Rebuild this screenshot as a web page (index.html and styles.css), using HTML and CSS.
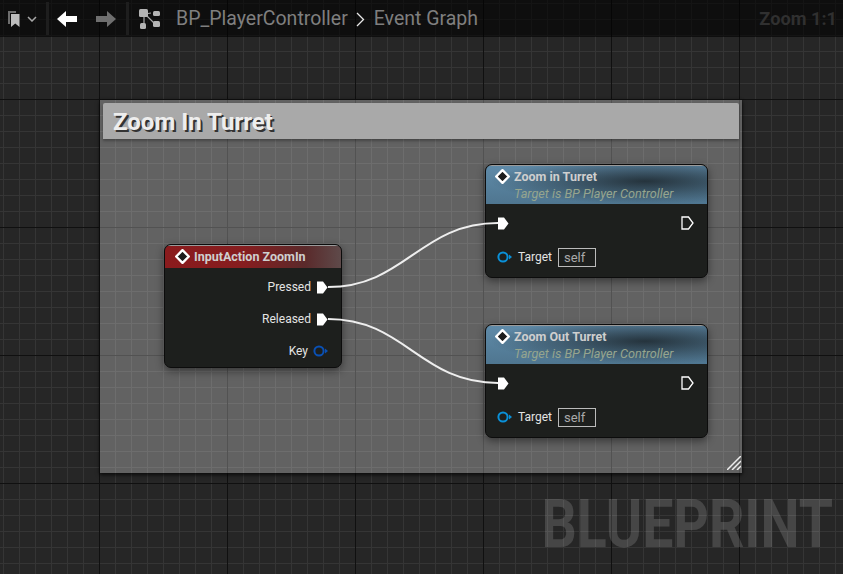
FILE: index.html
```html
<!DOCTYPE html>
<html lang="en">
<head>
  <meta charset="UTF-8" />
  <title>BP_PlayerController - Event Graph</title>
  <link rel="stylesheet" href="styles.css">
</head>
<body>
  <div class="graph">
    <div class="toolbar">
      <button class="tool tool-bookmark">
        <svg width="12" height="16" viewBox="0 0 12 16"><path d="M0 0h8v2H2v11H0z" fill="#6e6e6e"/><path d="M3 3h8.500v13L7.250 12.500 3 16z" fill="#bdbdbd"/></svg>
        <svg width="10" height="6" viewBox="0 0 10 6"><path d="M1 1l4 4 4-4" fill="none" stroke="#a8a8a8" stroke-width="1.500"/></svg>
      </button>
      <span class="sep"></span>
      <button class="tool tool-arrow">
        <svg width="20" height="16" viewBox="0 0 20 16"><path d="M0 8l9-8v5h11v6H9v5z" fill="#fff"/></svg>
      </button>
      <button class="tool tool-arrow tool-last">
        <svg width="20" height="16" viewBox="0 0 20 16"><path d="M20 8l-9-8v5H0v6h11v5z" fill="#6f6f6f"/></svg>
      </button>
      <span class="sep"></span>
      <svg class="graph-icon" width="22" height="20" viewBox="0 0 22 20">
        <path d="M6 5l6-1M6 5l9 9M5 8v6" stroke="#a8a8a8" stroke-width="1.200" fill="none"/>
        <rect x="0" y="0" width="9" height="8" rx="1.500" fill="#b4b4b4"/>
        <rect x="14" y="2" width="7" height="5" rx="1.500" fill="#b4b4b4"/>
        <rect x="1" y="14" width="6" height="6" rx="1.500" fill="#b4b4b4"/>
        <rect x="14" y="12" width="7" height="6" rx="1.500" fill="#b4b4b4"/>
      </svg>
      <span class="crumb">BP_PlayerController</span>
      <svg class="crumb-sep" width="9" height="15" viewBox="0 0 9 15"><path d="M1 1l6.500 6.500L1 14" fill="none" stroke="#e8e8e8" stroke-width="1.300"/></svg>
      <span class="crumb">Event Graph</span>
      <span class="zoom-label">Zoom 1:1</span>
    </div>

    <div class="comment">
      <div class="comment-title">Zoom In Turret</div>
      <svg class="resize" width="14" height="14" viewBox="0 0 14 14">
        <path d="M0 14L14 0M5 14L14 5M10 14l4-4" stroke="#eee" stroke-width="1.500" fill="none"/>
      </svg>
    </div>

    <div class="node node-input">
      <div class="node-head head-red">
        <div class="node-title">
          <svg class="diamond" width="15" height="15" viewBox="0 0 15 15"><path d="M7.500 1.200l6.300 6.300-6.300 6.300-6.300-6.300z" fill="#1c1c1c" stroke="#fff" stroke-width="2.400" stroke-linejoin="round"/></svg>
          InputAction ZoomIn
        </div>
      </div>
      <div class="node-body outputs">
        <div class="pin-row">Pressed <svg class="pin" width="12" height="13" viewBox="0 0 12 13"><path d="M1 .5h6l4.500 6-4.500 6H1z" fill="#fff"/></svg></div>
        <div class="pin-row">Released <svg class="pin" width="12" height="13" viewBox="0 0 12 13"><path d="M1 .5h6l4.500 6-4.500 6H1z" fill="#fff"/></svg></div>
        <div class="pin-row key-row">Key <svg class="pin" width="15" height="12" viewBox="0 0 15 12"><circle cx="6" cy="6" r="4.600" fill="none" stroke="#0a50b4" stroke-width="2"/><path d="M12 3.500L15 6l-3 2.500z" fill="#0a50b4"/></svg></div>
      </div>
    </div>

    <div class="node node-in">
      <div class="node-head head-blue">
        <div class="node-title">
          <svg class="diamond" width="15" height="15" viewBox="0 0 15 15"><path d="M7.500 1.200l6.300 6.300-6.300 6.300-6.300-6.300z" fill="#1c1c1c" stroke="#fff" stroke-width="2.400" stroke-linejoin="round"/></svg>
          Zoom in Turret
        </div>
        <div class="node-sub">Target is BP Player Controller</div>
      </div>
      <div class="node-body">
        <div class="exec-row">
          <svg width="12" height="13" viewBox="0 0 12 13"><path d="M1 .5h6l4.500 6-4.500 6H1z" fill="#fff"/></svg>
          <svg width="13" height="14" viewBox="0 0 13 14"><path d="M1 1h6.500l4.500 6-4.500 6H1z" fill="none" stroke="#fff" stroke-width="1.300"/></svg>
        </div>
        <div class="target-row">
          <svg width="15" height="12" viewBox="0 0 15 12"><circle cx="6" cy="6" r="4.600" fill="none" stroke="#0a90d8" stroke-width="2"/><path d="M12 3.500L15 6l-3 2.500z" fill="#0a90d8"/></svg>
          Target <span class="self">self</span>
        </div>
      </div>
    </div>

    <div class="node node-out">
      <div class="node-head head-blue">
        <div class="node-title">
          <svg class="diamond" width="15" height="15" viewBox="0 0 15 15"><path d="M7.500 1.200l6.300 6.300-6.300 6.300-6.300-6.300z" fill="#1c1c1c" stroke="#fff" stroke-width="2.400" stroke-linejoin="round"/></svg>
          Zoom Out Turret
        </div>
        <div class="node-sub">Target is BP Player Controller</div>
      </div>
      <div class="node-body">
        <div class="exec-row">
          <svg width="12" height="13" viewBox="0 0 12 13"><path d="M1 .5h6l4.500 6-4.500 6H1z" fill="#fff"/></svg>
          <svg width="13" height="14" viewBox="0 0 13 14"><path d="M1 1h6.500l4.500 6-4.500 6H1z" fill="none" stroke="#fff" stroke-width="1.300"/></svg>
        </div>
        <div class="target-row">
          <svg width="15" height="12" viewBox="0 0 15 12"><circle cx="6" cy="6" r="4.600" fill="none" stroke="#0a90d8" stroke-width="2"/><path d="M12 3.500L15 6l-3 2.500z" fill="#0a90d8"/></svg>
          Target <span class="self">self</span>
        </div>
      </div>
    </div>

    <svg class="wires" width="843" height="574" viewBox="0 0 843 574">
      <path d="M328 287C405 287 420 223 498 223" />
      <path d="M328 319C405 319 420 383 498 383" />
    </svg>

    <div class="watermark">BLUEPRINT</div>
  </div>
</body>
</html>
```

FILE: styles.css
```css
html, body {
  margin: 0;
  padding: 0;
}

body {
  font-family: Roboto, sans-serif;
  overflow: hidden;
}

/* grid: 16px minor lines, 128px major lines */
.graph {
  position: relative;
  width: 843px;
  height: 574px;
  overflow: hidden;
  background-color: #262626;
  background-image:
    linear-gradient(90deg, #101010 1px, transparent 1px),
    linear-gradient(#101010 1px, transparent 1px),
    linear-gradient(90deg, #353535 1px, transparent 1px),
    linear-gradient(#353535 1px, transparent 1px);
  background-size: 128px 128px, 128px 128px, 16px 16px, 16px 16px;
  background-position: 99px 0, 0 99px, 3px 0, 0 3px;
}

.toolbar {
  display: flex;
  align-items: center;
  box-sizing: border-box;
  height: 37px;
  background: rgba(0, 0, 0, 0.62);
  padding-left: 8px;
}

.tool {
  display: flex;
  align-items: center;
  gap: 7px;
  padding: 0;
  background: none;
  border: none;
}

.tool-bookmark {
  width: 38px;
}

.tool-arrow {
  width: 20px;
  margin-right: 19px;
}

.tool-last {
  margin-right: 10px;
}

.sep {
  width: 3px;
  height: 33px;
  background: #1e1e1e;
  margin-right: 8px;
}

.graph-icon {
  margin: 1px 15px 0 2px;
}

.crumb {
  font-size: 19.5px;
  color: #7f7f7f;
}

.crumb-sep {
  margin: 2px 9px 0 8px;
}

.zoom-label {
  margin-left: auto;
  margin-right: 6px;
  font-size: 18.2px;
  font-weight: 700;
  color: #303030;
}

.comment {
  position: absolute;
  left: 100px;
  top: 100px;
  width: 642px;
  height: 373px;
  box-sizing: border-box;
  padding: 3px;
  background: rgba(255, 255, 255, 0.28);
  box-shadow: 0 0 2px #111, 0 2px 4px rgba(0, 0, 0, 0.7);
}

.comment-title {
  height: 36px;
  line-height: 39px;
  padding-left: 10px;
  font-size: 24px;
  font-weight: 700;
  color: #eee;
  text-shadow: 2px 2px 0 #333;
  background: #a9a9a9;
  border-radius: 2px 2px 0 0;
  box-shadow: 0 2px 3px rgba(0, 0, 0, 0.3);
}

.resize {
  position: absolute;
  right: 1px;
  bottom: 3px;
}

.node {
  position: absolute;
  box-sizing: border-box;
  background: #1d1f1d;
  border: 1px solid #0c0c0c;
  border-radius: 7px;
  box-shadow: 0 3px 8px rgba(0, 0, 0, 0.45);
  overflow: hidden;
  font-size: 12px;
  color: #e4e4e4;
}

.node-input {
  left: 164px;
  top: 244px;
  width: 178px;
  height: 124px;
}

.node-in,
.node-out {
  left: 485px;
  width: 223px;
  height: 114px;
}

.node-in {
  top: 164px;
}

.node-out {
  top: 324px;
}

.node-head {
  box-sizing: border-box;
  border-top: 1px solid #9a9a9a;
  padding: 2px 0 0 9px;
}

.head-red {
  height: 23px;
  padding-left: 10px;
  background: linear-gradient(90deg, #8a1b1d, #861d1f 45%, #5a2a2b 80%, #5e4a4a 100%);
}

.head-blue {
  height: 39px;
  background:
    radial-gradient(ellipse 70% 60% at 72% 40%, rgba(20, 25, 28, 0.75), transparent),
    linear-gradient(#5f8aa8, #4f7690);
}

.node-title {
  display: flex;
  align-items: center;
  gap: 4px;
  height: 16px;
  font-size: 12.5px;
  font-weight: 700;
  color: #cfcfcf;
}

.node-sub {
  margin: 2px 0 0 19px;
  font-size: 12.7px;
  font-style: italic;
  color: #96a58e;
}

.outputs {
  padding-top: 3px;
}

.pin-row {
  display: flex;
  justify-content: flex-end;
  align-items: center;
  gap: 5px;
  height: 32px;
  padding-right: 13px;
}

.pin {
  flex: none;
}

.exec-row {
  display: flex;
  justify-content: space-between;
  align-items: center;
  height: 14px;
  padding: 12px 13px 0 11px;
}

.target-row {
  display: flex;
  align-items: center;
  gap: 6px;
  height: 18px;
  margin-top: 18px;
  padding-left: 11px;
}

.self {
  box-sizing: border-box;
  width: 38px;
  height: 19px;
  line-height: 17px;
  padding-left: 5px;
  border: 1px solid #bbb;
  color: #aaa;
  font-size: 13px;
}

.wires {
  position: absolute;
  left: 0;
  top: 0;
}

.wires path {
  fill: none;
  stroke: #eee;
  stroke-width: 2;
}

.watermark {
  position: absolute;
  right: 10px;
  top: 490px;
  font-size: 66px;
  line-height: 70px;
  font-weight: 700;
  color: rgba(255, 255, 255, 0.15);
  transform: scaleX(0.838);
  transform-origin: right;
}
```
